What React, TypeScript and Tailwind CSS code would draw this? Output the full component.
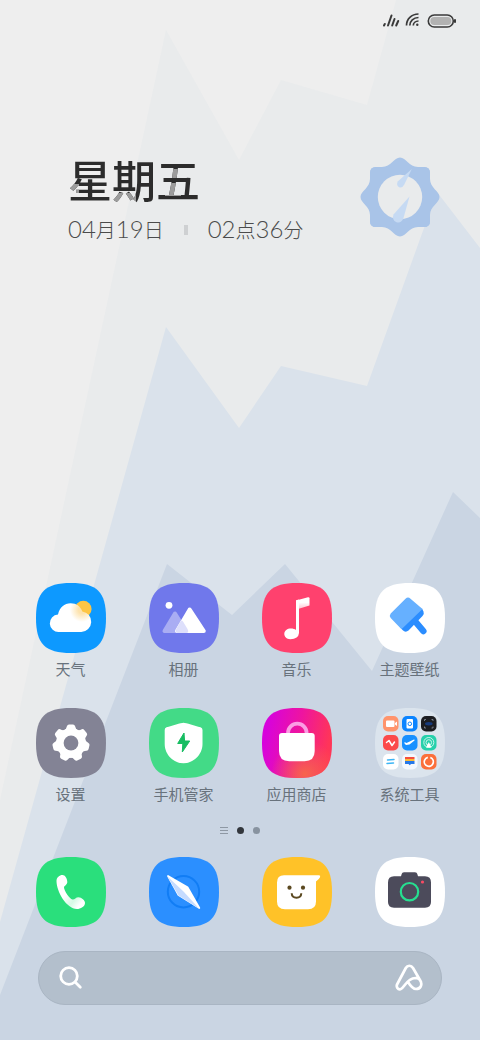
import type { ReactNode } from "react";

const SQUIRCLE = "M35 0C61 0 70 9 70 35S61 70 35 70 0 61 0 35 9 0 35 0Z";

interface AppEntry {
  name: string;
  icon: ReactNode;
}

function Tile({ fill, children }: { fill: string; children?: ReactNode }) {
  return (
    <svg viewBox="0 0 70 70" className="w-[70px] h-[70px] shrink-0" aria-hidden="true">
      <path d={SQUIRCLE} fill={fill} />
      {children}
    </svg>
  );
}

function WeatherIcon() {
  return (
    <Tile fill="#0d99ff">
      <defs>
        <radialGradient id="glow" gradientUnits="userSpaceOnUse" cx="46" cy="27" r="12">
          <stop offset="0.3" stopColor="#fde3ae" />
          <stop offset="1" stopColor="#fff" />
        </radialGradient>
      </defs>
      <circle cx="47.3" cy="26" r="8.3" fill="#fdc544" />
      <path
        d="M23 49A8.7 8.7 0 0 1 22 31.6C23.500 24.500 28.500 20.300 34.500 20.300 40.500 20.300 44.800 23.800 46.300 28.500A10.300 10.300 0 0 1 45.300 49Z"
        fill="url(#glow)"
      />
    </Tile>
  );
}

function GalleryIcon() {
  return (
    <Tile fill="#7078eb">
      <circle cx="20" cy="22.300" r="3.400" fill="#fff" />
      <path d="M26 30.500L15.500 48H37Z" fill="#a9adf3" stroke="#a9adf3" strokeWidth="4" strokeLinejoin="round" />
      <path d="M40.700 26.500L28 48H54.800Z" fill="#fff" stroke="#fff" strokeWidth="4" strokeLinejoin="round" />
      <path d="M31.500 38.500L27.500 45.500Q25 50 29 50H37Q40.500 50 38.500 46L34 38.500Q32.500 36.500 31.500 38.500Z" fill="#dddffb" />
    </Tile>
  );
}

function MusicIcon() {
  return (
    <Tile fill="#ff416e">
      <defs>
        <linearGradient id="flag" x1="0" y1="0" x2="0" y2="1">
          <stop offset="0.45" stopColor="#fff" />
          <stop offset="1" stopColor="#ffc0cf" />
        </linearGradient>
      </defs>
      <path d="M34 17.500L46 14.200Q47.500 14 47.500 15.200V22.500L36 26Z" fill="url(#flag)" />
      <path d="M34 18Q34 17 35 17L37 16.500V50Q36.500 56 28.300 56.200C24.500 56.200 22.300 53.500 22.300 51 22.300 47.500 25.500 45.500 28.700 45.500 31 45.500 33 46 34 47Z" fill="#fff" />
    </Tile>
  );
}

function ThemeIcon() {
  return (
    <Tile fill="#fff">
      <path d="M39 37L48.300 48" stroke="#2b8dff" strokeWidth="6.500" strokeLinecap="round" />
      <path d="M47 25.500L48.500 28.500Q49.500 31 47.500 33L33.500 47.500Q30.500 50 27.500 47L25 44Z" fill="#2b8dff" />
      <path d="M30.500 15.700Q33 13.500 35.500 15.700L47.500 26 26.500 46.200 15.700 35Q14 32.500 15.700 30.500Z" fill="#66b0ff" />
    </Tile>
  );
}

function SettingsIcon() {
  return (
    <Tile fill="#838395">
      <g fill="#fff" transform="translate(35 35)">
        <circle r="14.800" />
        {[0, 1, 2, 3, 4, 5, 6].map((n) => (
          <path
            key={n}
            d="M-7 -12.500Q-4.500 -14 -4 -17Q-3.500 -18.500 -2 -18.500H2Q3.500 -18.500 4 -17Q4.500 -14 7 -12.500Z"
            transform={`rotate(${(n * 360) / 7})`}
          />
        ))}
      </g>
      <circle cx="35" cy="35" r="7.400" fill="#838395" />
    </Tile>
  );
}

function SecurityIcon() {
  return (
    <Tile fill="#43da87">
      <path
        d="M34.500 14.700C37 14.700 46 17.800 51.500 19.200Q53.500 19.800 53.500 22V36C53.500 47 44 55.300 34.500 55.300S15.700 47 15.700 36V22Q15.700 19.800 17.500 19.200C23 17.800 32 14.700 34.500 14.700Z"
        fill="#fff"
      />
      <path d="M35 25L28.700 35.500H33.800L33.300 44 40.700 33H35.600Z" fill="#17bd62" stroke="#17bd62" strokeLinejoin="round" />
    </Tile>
  );
}

function StoreIcon() {
  return (
    <Tile fill="url(#store)">
      <defs>
        <linearGradient id="store" x1="0" y1="0.35" x2="1" y2="0.55">
          <stop offset="0.05" stopColor="#d703dc" />
          <stop offset="0.5" stopColor="#ee14a0" />
          <stop offset="0.95" stopColor="#ff3558" />
        </linearGradient>
        <radialGradient id="ember" gradientUnits="userSpaceOnUse" cx="43" cy="66" r="34">
          <stop stopColor="#f7644c" />
          <stop offset="1" stopColor="#f7644c" stopOpacity="0" />
        </radialGradient>
      </defs>
      <path d={SQUIRCLE} fill="url(#ember)" />
      <path d="M26 27V25A9.300 9.300 0 0 1 44.600 25V27" fill="none" stroke="#fb9ce4" strokeWidth="3.700" />
      <path d="M20 25H49.700Q52.700 25 52.700 28V43Q52.700 53.200 42.500 53.200H27.200Q17 53.200 17 43V28Q17 25 20 25Z" fill="#fff" />
    </Tile>
  );
}

function ToolsIcon() {
  const fills = ["#ff946c", "#0b84ff", "#1c1d21", "#fb4a4a", "#1890ff", "#25d0ab", "#fff", "#f4f8fd", "#fb6f3b"];
  return (
    <Tile fill="#dbe4ed">
      {fills.map((fill, n) => (
        <rect key={n} x={8 + (n % 3) * 19} y={8 + Math.floor(n / 3) * 19} width="15.500" height="15.500" rx="5" fill={fill} />
      ))}
      <path d="M11 13.500Q11 12.500 12 12.500H18.500Q19.500 12.500 19.500 13.500V18Q19.500 19 18.500 19H12Q11 19 11 18ZM20 15L22 13.500V18L20 16.500Z" fill="#fff" />
      <rect x="31.500" y="11" width="6.500" height="9.500" rx="1" fill="#fff" />
      <circle cx="34.800" cy="15.800" r="1.800" fill="none" stroke="#0b84ff" />
      <path d="M49.500 13V11.500H51M56.500 11.500H58V13M58 18.500V20H56.500M51 20H49.500V18.500" fill="none" stroke="#8e96a3" strokeWidth="0.800" />
      <ellipse cx="53.800" cy="15.800" rx="3.800" ry="1.700" fill="#163a7c" />
      <path d="M11.500 34.500L14 32.500 17 37.500 19.500 34" fill="none" stroke="#fff" strokeWidth="1.500" strokeLinecap="round" strokeLinejoin="round" />
      <path d="M29.500 34L31.500 35 39 31.500Q40 31.500 39.500 32.500L34.500 36.500 31 37 29.500 35.500Z" fill="#fff" />
      <g fill="none" stroke="#c9f5ea">
        <circle cx="53.800" cy="34.500" r="5" />
        <circle cx="53.800" cy="34.500" r="2.800" />
      </g>
      <path d="M53.800 34L56.500 39.500H51Z" fill="#fff" />
      <path d="M12.500 52L19 51.500M12 55.500L18.500 55" stroke="#3cb5f5" strokeWidth="1.500" strokeLinecap="round" />
      <rect x="30" y="49" width="9.500" height="2" fill="#f4503d" />
      <rect x="30" y="51" width="9.500" height="2" fill="#fdba35" />
      <path d="M30 53H39.500V56H36L34.800 57.200 33.500 56H30Z" fill="#2678e8" />
      <circle cx="53.800" cy="53.800" r="4.500" fill="none" stroke="#fff" strokeWidth="1.700" strokeDasharray="25 3.300" transform="rotate(-70 53.800 53.800)" />
    </Tile>
  );
}

function PhoneIcon() {
  return (
    <Tile fill="#2adf7c">
      <defs>
        <linearGradient id="handset" x1="0" y1="0" x2="1" y2="1">
          <stop offset="0.45" stopColor="#fff" />
          <stop offset="0.68" stopColor="#d5fae5" />
          <stop offset="0.85" stopColor="#fff" />
        </linearGradient>
      </defs>
      <path
        d="M20.500 24C20.500 20.500 23.500 18 26.500 18 29 18 31.300 21.500 31.300 25 31.300 28 28 28.500 28 30.500 28 33.500 33.500 42 36.500 42.500 38.500 43 39.500 40.300 42.500 40.300 45.500 40.300 49 43.500 49 46 49 49.500 44.500 52 41 52 30.500 52 20.500 34.500 20.500 24Z"
        fill="url(#handset)"
      />
    </Tile>
  );
}

function BrowserIcon() {
  return (
    <Tile fill="#2b8fff">
      <circle cx="34.500" cy="34.700" r="15.700" fill="none" stroke="#117df5" strokeWidth="2" />
      <path d="M19 19L38.500 30.300 50.300 51 29.500 38Z" fill="#fff" stroke="#fff" strokeWidth="1.800" strokeLinejoin="round" />
      <path d="M18.500 19.500L34.500 34.500 50 51.500 29.500 38.500Z" fill="#c5dbff" />
    </Tile>
  );
}

function MessagesIcon() {
  return (
    <Tile fill="#ffc228">
      <path
        d="M22 18.300H57Q58.800 18.300 58 20.300Q57 22.500 54 24.500V44.500Q54 52.300 46 52.300H23Q15 52.300 15 44.500V25.500Q15 18.300 22 18.300Z"
        fill="#fff"
      />
      <circle cx="27.500" cy="30.700" r="2.100" fill="#5b4920" />
      <circle cx="41" cy="30.700" r="2.100" fill="#5b4920" />
      <path d="M29.700 36.300C30 42.300 39 42.300 39.300 36.300" fill="none" stroke="#5b4920" strokeWidth="2" />
    </Tile>
  );
}

function CameraIcon() {
  return (
    <Tile fill="#fff">
      <path
        d="M26 19.300L26.700 17Q27 15.300 29 15.300H40Q42 15.300 42.300 17L43 19.300H50Q56 19.300 56 25.500V45Q56 50.700 50 50.700H19Q13 50.700 13 45V25.500Q13 19.300 19 19.300Z"
        fill="#4c4b5b"
      />
      <circle cx="34.500" cy="34.700" r="8.700" fill="none" stroke="#26df90" strokeWidth="2.200" />
      <circle cx="47.500" cy="25" r="1.600" fill="#fa4a64" />
    </Tile>
  );
}

const apps: AppEntry[] = [
  { name: "天气", icon: <WeatherIcon /> },
  { name: "相册", icon: <GalleryIcon /> },
  { name: "音乐", icon: <MusicIcon /> },
  { name: "主题壁纸", icon: <ThemeIcon /> },
  { name: "设置", icon: <SettingsIcon /> },
  { name: "手机管家", icon: <SecurityIcon /> },
  { name: "应用商店", icon: <StoreIcon /> },
  { name: "系统工具", icon: <ToolsIcon /> },
];

const dock: AppEntry[] = [
  { name: "电话", icon: <PhoneIcon /> },
  { name: "浏览器", icon: <BrowserIcon /> },
  { name: "信息", icon: <MessagesIcon /> },
  { name: "相机", icon: <CameraIcon /> },
];

function Wallpaper() {
  return (
    <svg
      viewBox="0 0 480 1040"
      preserveAspectRatio="none"
      className="absolute inset-0 w-full h-full -z-10"
      aria-hidden="true"
    >
      <path d="M0 0H480V1040H0Z" fill="#eeeeee" />
      <path d="M0 800L166 30 239 160 281 80 367 105 396 0H480V1040H0Z" fill="#e9ebec" />
      <path d="M0 922L166 327 239 428 281 366 367 386 437 192 480 248V1040H0Z" fill="#dae2eb" />
      <path d="M0 995L167 564 232 615 285 564 372 671 453 492 480 518V1040H0Z" fill="#cad5e3" />
    </svg>
  );
}

function StatusBar() {
  return (
    <header className="flex items-center justify-end gap-1 h-7 pt-[14px] pr-6 text-[#3a3a3a]">
      <svg viewBox="0 0 18 16" className="w-[18px] h-4" fill="none" stroke="currentColor" strokeWidth="2" strokeLinecap="round">
        <path d="M2 12.500L2.800 11M6 12.500L9.500 2.500M10.200 12.500L12.500 6M14.200 12.500L16.200 8" />
      </svg>
      <svg viewBox="0 0 18 16" className="w-[18px] h-4" fill="none" stroke="currentColor" strokeWidth="1.700">
        <path d="M2.500 12.500C2.500 6 7.500 1 14.500 1M5.800 12.500C5.800 8 9.500 4.500 14.500 4.500M9.300 12.500C9.300 10 11.500 8 14.500 8" />
        <circle cx="13.300" cy="11.700" r="1.200" fill="currentColor" stroke="none" />
      </svg>
      <svg viewBox="0 0 30 16" className="w-[30px] h-4">
        <rect x="2.300" y="2" width="25" height="12" rx="6" fill="none" stroke="currentColor" strokeWidth="1.600" />
        <rect x="4.300" y="3.900" width="21" height="8.200" rx="4" fill="#b2b2b2" />
        <path d="M29 6.300V9.800" stroke="currentColor" strokeWidth="2" />
      </svg>
    </header>
  );
}

function DialClock() {
  const quarter =
    "M-24 -30H-18C-9 -30 -6 -39.500 0 -39.500S9 -30 18 -30H24Q30 -30 30 -24V0H-30V-24Q-30 -30 -24 -30Z";
  return (
    <svg viewBox="-40 -40 80 80" className="w-20 h-20 shrink-0" role="img" aria-label="02:36">
      {[0, 90, 180, 270].map((deg) => (
        <path key={deg} d={quarter} fill="#a9c4e8" transform={`rotate(${deg})`} />
      ))}
      <circle r="22.200" fill="#e9ebec" />
      <path d="M11.800 -28L4.300 -12.500Q2.500 -8.800 -0.800 -9.700Q-4 -11.500 -2.300 -15.500Z" fill="#c6daf3" />
      <path d="M9.500 -0.500L3.500 21Q1.500 26.500 -3.500 25.200Q-8.500 23 -6.500 17.500Z" fill="#c6daf3" />
    </svg>
  );
}

// Western digits sit slightly larger than the characters between them
function Digits({ children }: { children: string }) {
  return <span className="text-[24px]">{children}</span>;
}

function ClockWidget() {
  return (
    <section className="flex justify-between items-start pl-[68px] pr-10 pt-[129px]">
      <div>
        {/* each character has one stroke picked out in grey */}
        <h1 className="flex text-[44px] leading-[48px] font-medium text-transparent">
          <span className="bg-clip-text bg-no-repeat bg-[linear-gradient(#9c9c9c,#9c9c9c),linear-gradient(#2c2c2c,#2c2c2c)] bg-[size:11px_11px,100%_100%] bg-[position:0_27px,0_0]">
            星
          </span>
          <span className="bg-clip-text bg-no-repeat bg-[linear-gradient(#9c9c9c,#9c9c9c),linear-gradient(#2c2c2c,#2c2c2c)] bg-[size:24px_12px,100%_100%] bg-[position:0_100%,0_0]">
            期
          </span>
          <span className="bg-clip-text bg-no-repeat bg-[linear-gradient(#9c9c9c,#9c9c9c),linear-gradient(#9c9c9c,#9c9c9c),linear-gradient(#2c2c2c,#2c2c2c)] bg-[size:16px_9px,16px_13px,100%_100%] bg-[position:9px_12px,9px_26px,0_0]">
            五
          </span>
        </h1>
        <p className="flex items-center gap-5 mt-2 text-[20px] leading-8 font-light text-[#4b4b4b]">
          <span>
            <Digits>04</Digits>月<Digits>19</Digits>日
          </span>
          <span className="w-1 h-[10px] bg-[#ced0d2]" />
          <span>
            <Digits>02</Digits>点<Digits>36</Digits>分
          </span>
        </p>
      </div>
      <DialClock />
    </section>
  );
}

function Pager() {
  return (
    <nav className="flex items-center justify-center gap-[9px] h-6">
      <button aria-label="负一屏" className="flex flex-col gap-[2px] w-2">
        <span className="h-px bg-[#8e98a4]" />
        <span className="h-px bg-[#8e98a4]" />
        <span className="h-px bg-[#8e98a4]" />
      </button>
      <button aria-label="第一页" className="w-[7px] h-[7px] rounded-full bg-[#32363c]" />
      <button aria-label="第二页" className="w-[7px] h-[7px] rounded-full bg-[#8893a0]" />
    </nav>
  );
}

export default function App() {
  return (
    <div className="relative isolate flex flex-col min-h-screen overflow-hidden font-[Lato,'Noto_Sans_CJK_SC',sans-serif]">
      <Wallpaper />
      <StatusBar />
      <ClockWidget />

      <main className="mt-auto">
        <div className="grid grid-cols-4 gap-y-[29px] px-[14px]">
          {apps.map((app) => (
            <button key={app.name} className="flex flex-col items-center gap-[6px] text-[15px] leading-5 text-[#68727c]">
              {app.icon}
              <span>{app.name}</span>
            </button>
          ))}
        </div>

        <div className="pt-[14px] pb-[15px]">
          <Pager />
        </div>

        <div className="grid grid-cols-4 px-[14px]">
          {dock.map((app) => (
            <button key={app.name} aria-label={app.name} className="flex justify-center">
              {app.icon}
            </button>
          ))}
        </div>
      </main>

      <form className="flex items-center h-[54px] mt-6 mb-[35px] mx-[38px] px-[18px] rounded-full bg-[#b3bfcc] border border-[#a9b5c3] text-white">
        <svg viewBox="0 0 28 28" className="w-7 h-7" fill="none" stroke="currentColor" strokeWidth="2.800" strokeLinecap="round">
          <circle cx="12" cy="12" r="8.300" />
          <path d="M18.300 18.300L23.300 23.300" />
        </svg>
        <input type="search" aria-label="搜索" className="flex-1 min-w-0 h-full bg-transparent outline-none" />
        <button type="button" aria-label="语音助手">
          <svg viewBox="0 0 28 28" className="w-7 h-7" fill="none" stroke="currentColor" strokeWidth="2.700" strokeLinecap="round" strokeLinejoin="round">
            <path d="M13 18C15.500 22 18 25 21 25 25.500 25 27.500 21 25.500 17L18 4C16.200 1 12.500 1 10.800 4L2.300 20C0.700 23 3 25.800 5.500 25.200 10 23.800 11 14.500 20.500 14 23 14 25 15.300 25.900 17.800" />
          </svg>
        </button>
      </form>
    </div>
  );
}
